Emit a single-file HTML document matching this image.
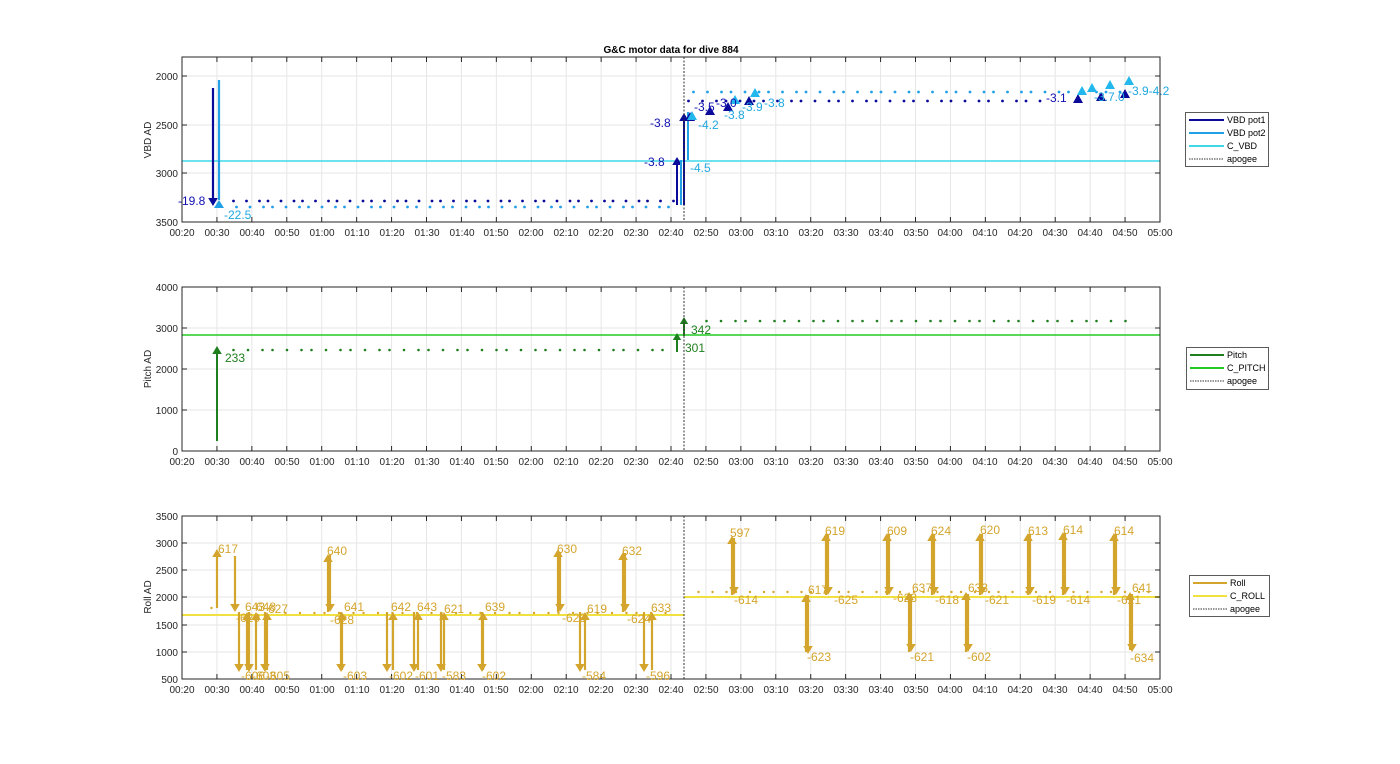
<!DOCTYPE html>
<html><head><meta charset="utf-8"><style>
html,body{margin:0;padding:0;background:#fff;}
svg{display:block;font-family:"Liberation Sans",Arial,sans-serif;}
.t{font-size:10px;fill:#262626;}
</style></head><body>
<svg id="s" width="1400" height="764" viewBox="0 0 1400 764" xmlns="http://www.w3.org/2000/svg">
<rect width="1400" height="764" fill="#fff"/>
<g id="grids"></g>
<g id="data"></g>
<text x="671" y="53" text-anchor="middle" style="font-size:10px;font-weight:bold;fill:#000">G&amp;C motor data for dive 884</text>
<g class="t" text-anchor="end">
<text x="178" y="80">2000</text><text x="178" y="129">2500</text><text x="178" y="177">3000</text><text x="178" y="226">3500</text>
<text x="178" y="291">4000</text><text x="178" y="332">3000</text><text x="178" y="373">2000</text><text x="178" y="414">1000</text><text x="178" y="455">0</text>
<text x="178" y="520">3500</text><text x="178" y="547">3000</text><text x="178" y="574">2500</text><text x="178" y="601">2000</text><text x="178" y="629">1500</text><text x="178" y="656">1000</text><text x="178" y="683">500</text>
</g>
<g class="t" text-anchor="middle">
<text transform="translate(151,140) rotate(-90)">VBD AD</text>
<text transform="translate(151,369) rotate(-90)">Pitch AD</text>
<text transform="translate(151,597) rotate(-90)">Roll AD</text>
</g>
<g id="xl" class="t" text-anchor="middle">
<g transform="translate(0,236)">
<text x="182">00:20</text><text x="217">00:30</text><text x="252">00:40</text><text x="287">00:50</text><text x="322">01:00</text><text x="357">01:10</text><text x="392">01:20</text><text x="427">01:30</text><text x="462">01:40</text><text x="496">01:50</text><text x="531">02:00</text><text x="566">02:10</text><text x="601">02:20</text><text x="636">02:30</text><text x="671">02:40</text><text x="706">02:50</text><text x="741">03:00</text><text x="776">03:10</text><text x="811">03:20</text><text x="846">03:30</text><text x="881">03:40</text><text x="916">03:50</text><text x="950">04:00</text><text x="985">04:10</text><text x="1020">04:20</text><text x="1055">04:30</text><text x="1090">04:40</text><text x="1125">04:50</text><text x="1160">05:00</text>
</g>
<g transform="translate(0,465)">
<text x="182">00:20</text><text x="217">00:30</text><text x="252">00:40</text><text x="287">00:50</text><text x="322">01:00</text><text x="357">01:10</text><text x="392">01:20</text><text x="427">01:30</text><text x="462">01:40</text><text x="496">01:50</text><text x="531">02:00</text><text x="566">02:10</text><text x="601">02:20</text><text x="636">02:30</text><text x="671">02:40</text><text x="706">02:50</text><text x="741">03:00</text><text x="776">03:10</text><text x="811">03:20</text><text x="846">03:30</text><text x="881">03:40</text><text x="916">03:50</text><text x="950">04:00</text><text x="985">04:10</text><text x="1020">04:20</text><text x="1055">04:30</text><text x="1090">04:40</text><text x="1125">04:50</text><text x="1160">05:00</text>
</g>
<g transform="translate(0,693)">
<text x="182">00:20</text><text x="217">00:30</text><text x="252">00:40</text><text x="287">00:50</text><text x="322">01:00</text><text x="357">01:10</text><text x="392">01:20</text><text x="427">01:30</text><text x="462">01:40</text><text x="496">01:50</text><text x="531">02:00</text><text x="566">02:10</text><text x="601">02:20</text><text x="636">02:30</text><text x="671">02:40</text><text x="706">02:50</text><text x="741">03:00</text><text x="776">03:10</text><text x="811">03:20</text><text x="846">03:30</text><text x="881">03:40</text><text x="916">03:50</text><text x="950">04:00</text><text x="985">04:10</text><text x="1020">04:20</text><text x="1055">04:30</text><text x="1090">04:40</text><text x="1125">04:50</text><text x="1160">05:00</text>
</g>
</g>
<g style="font-size:12px">
<text x="178" y="205" fill="#1010b0">-19.8</text>
<text x="224" y="219" fill="#20a8e0">-22.5</text>
<text x="644" y="166" fill="#1010b0">-3.8</text>
<text x="650" y="127" fill="#1010b0">-3.8</text>
<text x="690" y="172" fill="#20a8e0">-4.5</text>
<text x="698" y="129" fill="#20a8e0">-4.2</text>
<text x="694" y="111" fill="#1010b0">-3.5</text>
<text x="716" y="107" fill="#1010b0">-3.0</text>
<text x="724" y="119" fill="#20a8e0">-3.8</text>
<text x="742" y="111" fill="#20a8e0">-3.9</text>
<text x="764" y="107" fill="#20a8e0">-3.8</text>
<text x="1046" y="102" fill="#1010b0">-3.1</text>
<text x="1094" y="101" fill="#20a8e0">-3.7.0</text>
<text x="1128" y="95" fill="#20a8e0">-3.9-4.2</text>
<text x="225" y="362" fill="#1f7f1f">233</text>
<text x="685" y="352" fill="#1f7f1f">301</text>
<text x="691" y="334" fill="#1f7f1f">342</text>
</g>
<g style="font-size:12px" fill="#d4a52c">
<text x="218" y="553">617</text><text x="236" y="622">-620</text><text x="245" y="611">643</text><text x="256" y="611">648</text><text x="268" y="613">627</text>
<text x="241" y="680">-606</text><text x="252" y="680">-603</text><text x="266" y="680">-605</text>
<text x="327" y="555">640</text><text x="330" y="624">-628</text><text x="344" y="611">641</text><text x="343" y="680">-603</text>
<text x="391" y="611">642</text><text x="417" y="611">643</text><text x="444" y="613">621</text><text x="485" y="611">639</text>
<text x="389" y="680">-602</text><text x="415" y="680">-601</text><text x="442" y="680">-583</text><text x="482" y="680">-602</text>
<text x="557" y="553">630</text><text x="562" y="622">-629</text><text x="587" y="613">619</text><text x="582" y="680">-584</text>
<text x="622" y="555">632</text><text x="627" y="623">-624</text><text x="651" y="612">633</text><text x="646" y="680">-596</text>
<text x="730" y="537">597</text><text x="734" y="604">-614</text>
<text x="808" y="594">617</text><text x="807" y="661">-623</text><text x="825" y="535">619</text><text x="834" y="604">-625</text>
<text x="887" y="535">609</text><text x="893" y="602">-623</text><text x="912" y="592">637</text><text x="910" y="661">-621</text>
<text x="931" y="535">624</text><text x="935" y="604">-618</text><text x="968" y="592">633</text><text x="967" y="661">-602</text>
<text x="980" y="534">620</text><text x="985" y="604">-621</text><text x="1028" y="535">613</text><text x="1032" y="604">-619</text>
<text x="1063" y="534">614</text><text x="1066" y="604">-614</text><text x="1114" y="535">614</text><text x="1117" y="604">-621</text>
<text x="1132" y="592">641</text><text x="1130" y="662">-634</text>
</g>
<g style="font-size:9px;fill:#000">
<rect x="1185.5" y="112.5" width="83" height="54" fill="#fff" stroke="#333" stroke-width="0.8"/>
<line x1="1189" y1="120" x2="1224" y2="120" stroke="#0a0a9a" stroke-width="2"/><text x="1227" y="123">VBD pot1</text>
<line x1="1189" y1="133" x2="1224" y2="133" stroke="#22a0e6" stroke-width="2"/><text x="1227" y="136">VBD pot2</text>
<line x1="1189" y1="146" x2="1224" y2="146" stroke="#3ed8e8" stroke-width="2"/><text x="1227" y="149">C_VBD</text>
<line x1="1189" y1="159" x2="1224" y2="159" stroke="#333" stroke-dasharray="1.5,1"/><text x="1227" y="162">apogee</text>
<rect x="1186.5" y="347.5" width="82" height="42" fill="#fff" stroke="#333" stroke-width="0.8"/>
<line x1="1190" y1="355" x2="1224" y2="355" stroke="#1f7f1f" stroke-width="2"/><text x="1227" y="358">Pitch</text>
<line x1="1190" y1="368" x2="1224" y2="368" stroke="#22cc22" stroke-width="2"/><text x="1227" y="371">C_PITCH</text>
<line x1="1190" y1="381" x2="1224" y2="381" stroke="#333" stroke-dasharray="1.5,1"/><text x="1227" y="384">apogee</text>
<rect x="1189.5" y="575.5" width="80" height="41" fill="#fff" stroke="#333" stroke-width="0.8"/>
<line x1="1193" y1="583" x2="1227" y2="583" stroke="#d4a52c" stroke-width="2"/><text x="1230" y="586">Roll</text>
<line x1="1193" y1="596" x2="1227" y2="596" stroke="#f0e040" stroke-width="2"/><text x="1230" y="599">C_ROLL</text>
<line x1="1193" y1="609" x2="1227" y2="609" stroke="#333" stroke-dasharray="1.5,1"/><text x="1230" y="612">apogee</text>
</g>
<script>
(function(){
var NS="http://www.w3.org/2000/svg";
var G=document.getElementById('grids'),D=document.getElementById('data');
function el(p,t,a){var e=document.createElementNS(NS,t);for(var k in a)e.setAttribute(k,a[k]);p.appendChild(e);return e;}
var axes=[[57,222,[76,125,173]],[287,451,[328,369,410]],[516,679,[543,570,597,625,652]]];
axes.forEach(function(a){
 for(var i=1;i<28;i++){var x=182+i*978/28;el(G,'line',{x1:x,y1:a[0],x2:x,y2:a[1],stroke:'#e6e6e6'});}
 a[2].forEach(function(y){el(G,'line',{x1:182,y1:y,x2:1160,y2:y,stroke:'#e6e6e6'});});
});
function ln(x1,y1,x2,y2,c,w,da){var o={x1:x1,y1:y1,x2:x2,y2:y2,stroke:c,'stroke-width':w||1};if(da)o['stroke-dasharray']=da;el(D,'line',o);}
function dots(x0,x1,step,y,c,r){var k=0;for(var x=x0;x<=x1;x+=step){el(D,'circle',{cx:x+((k%3)-1)*1.5,cy:y,r:r||1.4,fill:c});k++;}}
ln(182,161,1160,161,'#3ed8e8',1.5);
dots(235,672,11.5,201,'#0a0a9a',1.4);dots(238,675,12,207,'#22a0e6',1.4);
dots(690,1050,12.5,101,'#0a0a9a',1.4);dots(695,1130,12.5,92,'#22a0e6',1.4);
function arrow(x,y1,y2,c,w,hs){ln(x,y1,x,y2+(y2>y1?-hs:hs),c,w);var d=y2>y1?-1:1;el(D,'polygon',{points:(x-hs*0.6)+','+(y2+d*hs)+' '+(x+hs*0.6)+','+(y2+d*hs)+' '+x+','+y2,fill:c});}
arrow(213,88,206,'#0a0a9a',2.2,8);ln(219,80,219,200,'#22a0e6',2.2);el(D,'polygon',{points:'214,208 224,208 219,200',fill:'#22a0e6'});
arrow(677,205,157,'#0a0a9a',2,8);arrow(684,205,113,'#0a0a9a',2,8);ln(688,112,688,160,'#22a0e6',2);ln(681,160,681,205,'#22a0e6',2);
[[690,116],[710,110],[728,106],[749,100],[1078,98],[1101,96],[1125,93]].forEach(function(p){el(D,'polygon',{points:(p[0]-5)+','+(p[1]+5)+' '+(p[0]+5)+','+(p[1]+5)+' '+p[0]+','+(p[1]-4),fill:'#0a0a9a'});});
[[692,115],[735,99],[755,92],[1082,90],[1092,87],[1110,84],[1129,80]].forEach(function(p){el(D,'polygon',{points:(p[0]-5)+','+(p[1]+5)+' '+(p[0]+5)+','+(p[1]+5)+' '+p[0]+','+(p[1]-4),fill:'#22b8ee'});});
ln(182,335,1160,335,'#22cc22',1.5);
dots(235,670,13,350,'#1f7f1f',1.3);dots(708,1127,13,321,'#1f7f1f',1.3);
arrow(217,441,346,'#1f7f1f',2,8);arrow(677,352,333,'#1f7f1f',2,7);arrow(684,336,317,'#1f7f1f',2,7);
ln(182,615,684,615,'#f0e040',2);ln(684,597,1160,597,'#f0e040',2);
dots(213,213,1,608,'#d4a52c',1.2);dots(287,670,13,613,'#d4a52c',1.2);dots(700,1150,12.5,592,'#d4a52c',1.2);
var c='#d4a52c';
[[217,608,549],[328,612,554],[558,612,549],[623,612,552],[247,670,612],[256,670,612],[267,670,612],[342,670,612],[393,670,612],[418,670,612],[444,670,612],[483,670,612],[585,670,612],[652,670,612],
[732,595,536],[826,595,533],[887,595,533],[932,595,533],[980,595,533],[1028,595,533],[1063,595,532],[1114,595,533],[806,652,594],[909,652,592],[966,652,592],[1130,650,592]].forEach(function(a){arrow(a[0],a[1],a[2],c,2.2,8);});
[[235,556,612],[239,612,672],[249,612,672],[265,612,672],[330,555,612],[341,612,672],[387,612,672],[414,612,672],[441,612,672],[482,612,672],[560,552,612],[580,612,672],[625,553,612],[644,612,672],
[734,538,595],[828,534,595],[889,534,595],[934,534,595],[982,534,595],[1030,534,595],[1065,533,595],[1116,534,595],[808,595,654],[911,594,652],[968,594,652],[1132,594,652]].forEach(function(a){arrow(a[0],a[1],a[2],c,2.2,8);});
ln(684,57,684,222,'#333',1,'2,1.5');ln(684,287,684,451,'#333',1,'2,1.5');ln(684,516,684,679,'#333',1,'2,1.5');
axes.forEach(function(a){
 el(D,'rect',{x:182,y:a[0],width:978,height:a[1]-a[0],fill:'none',stroke:'#262626','stroke-width':1});
 for(var i=1;i<28;i++){var x=182+i*978/28;ln(x,a[1],x,a[1]-5,'#262626');ln(x,a[0],x,a[0]+5,'#262626');}
 a[2].forEach(function(y){ln(182,y,187,y,'#262626');ln(1160,y,1155,y,'#262626');});
});
})();
</script>
</svg>
</body></html>
